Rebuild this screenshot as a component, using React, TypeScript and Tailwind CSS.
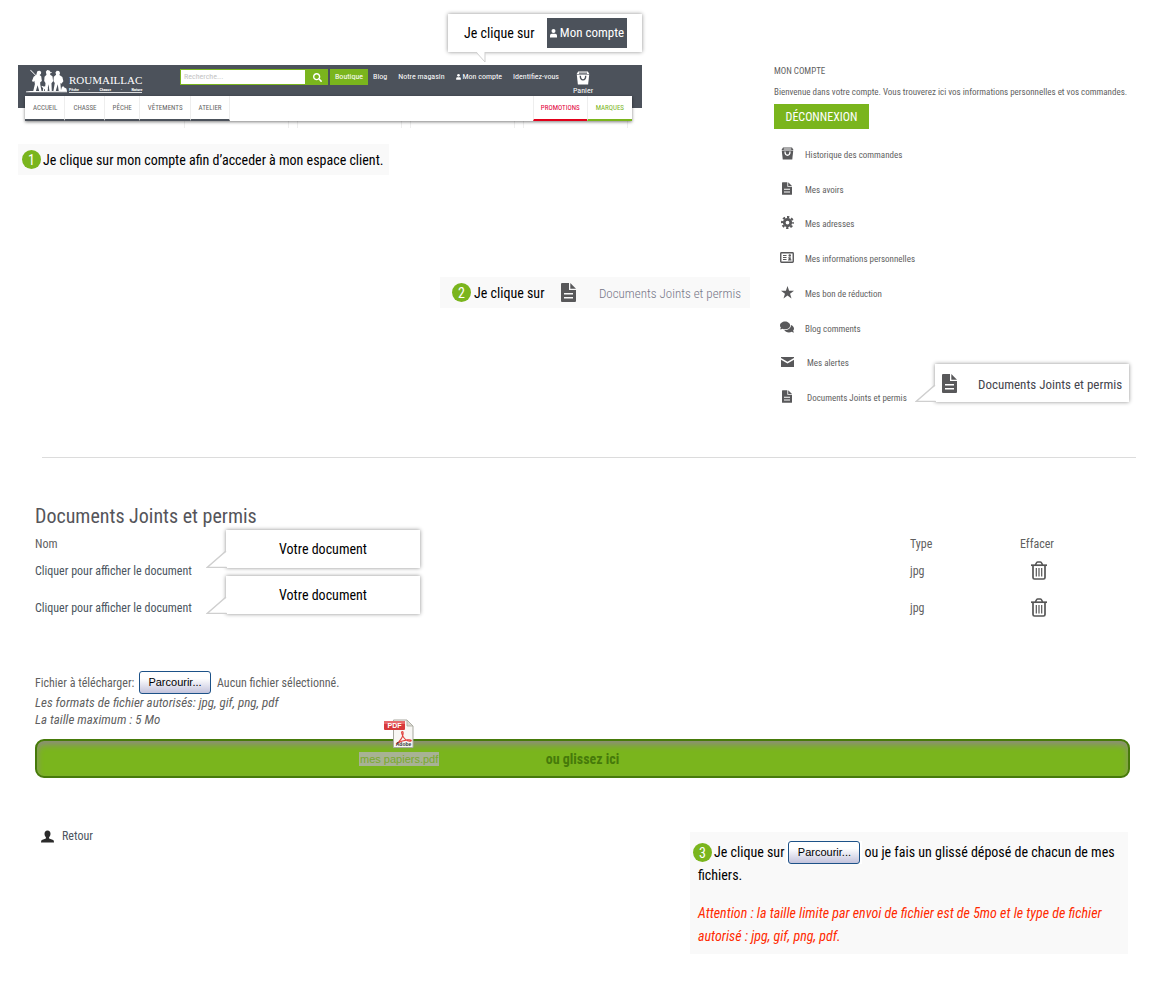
import type { ReactNode } from "react";
import { FaComments, FaSearch } from "react-icons/fa";

type IconProps = { className?: string };

function BagIcon({ className }: IconProps) {
  return (
    <svg viewBox="0 0 26 26" className={className} fill="none" aria-hidden="true">
      <path d="M4 1h18l3 5H1z" fill="currentColor" />
      <path d="M5.500 4h15" className="stroke-[#4c525b] group-[.menu]:stroke-white" strokeWidth="2" />
      <path d="M1.500 7h23L22.500 25h-19z" fill="currentColor" />
      <path className="stroke-[#4c525b] group-[.menu]:stroke-white" d="M8 9c0 10 10 10 10 0" strokeWidth="2.600" />
    </svg>
  );
}

function DocIcon({ className }: IconProps) {
  return (
    <svg viewBox="0 0 15 19" className={className} fill="currentColor" aria-hidden="true">
      <path d="M1 0h7v7h7v11a1 1 0 0 1-1 1H1a1 1 0 0 1-1-1V1a1 1 0 0 1 1-1zm2 10v1.500h9V10zm0 4v1.500h9V14z" fillRule="evenodd" />
      <path d="M9.300 0 15 5.700H9.300z" />
    </svg>
  );
}

function GearIcon({ className }: IconProps) {
  return (
    <svg viewBox="0 0 26 26" className={className} fill="none" stroke="currentColor" aria-hidden="true">
      <circle cx="13" cy="13" r="6.500" strokeWidth="5.500" />
      <circle cx="13" cy="13" r="11" strokeWidth="4" strokeDasharray="4.640 4" strokeDashoffset="2.320" />
    </svg>
  );
}

function IdIcon({ className }: IconProps) {
  return (
    <svg viewBox="0 0 28 22" className={className} fill="none" stroke="currentColor" aria-hidden="true">
      <rect x="1.500" y="1.500" width="25" height="19" rx="1.500" strokeWidth="2.800" />
      <path d="M6 7h7M6 11h7M6 15h7" strokeWidth="2.200" />
      <circle cx="19.500" cy="7" r="2.500" fill="currentColor" stroke="none" />
      <path d="M16.500 10.500h5v4.500H23V17h-7v-2h1.500V12.500h-1z" fill="currentColor" stroke="none" />
    </svg>
  );
}

function StarIcon({ className }: IconProps) {
  return (
    <svg viewBox="0 0 26 26" className={className} fill="currentColor" aria-hidden="true">
      <path d="M13 0l3.200 9.500H26l-7.900 6L21 25l-8-5.800L5 25l2.900-9.500L0 9.500h9.800z" />
    </svg>
  );
}

function MailIcon({ className }: IconProps) {
  return (
    <svg viewBox="0 0 26 20" className={className} fill="currentColor" aria-hidden="true">
      <path d="M0 0h26v2L13 9.500 0 2z" />
      <path d="M0 5.500l13 7.500 13-7.500V20H0z" />
    </svg>
  );
}

function TrashIcon({ className }: IconProps) {
  return (
    <svg viewBox="0 0 16 19" className={className} fill="none" stroke="currentColor" aria-hidden="true">
      <path d="M0 4.200h16" strokeWidth="1.700" />
      <path d="M4.500 4l.8-2c.2-.6.600-1 1.300-1h2.800c.7 0 1.100.4 1.300 1l.8 2" strokeWidth="1.600" />
      <path d="M2 4.500v12c0 1 .5 1.500 1.500 1.500h9c1 0 1.500-.5 1.500-1.500v-12" strokeWidth="1.700" />
      <path d="M5.300 7v8.500M8 7v8.500M10.700 7v8.500" strokeWidth="1.200" />
    </svg>
  );
}

function PersonIcon({ className }: IconProps) {
  return (
    <svg viewBox="0 0 26 26" className={className} fill="currentColor" aria-hidden="true">
      <path d="M13 1c4 0 6 2.500 6 6.500 0 3-1.200 5.500-2.800 7v2.300L23 19.500c2 .8 3 2 3 5.500H0c0-3.500 1-4.700 3-5.500l6.800-2.700v-2.300C8.200 13 7 10.500 7 7.500 7 3.500 9 1 13 1z" />
    </svg>
  );
}

function UserIcon({ className }: IconProps) {
  return (
    <svg viewBox="0 0 14 18" className={className} fill="currentColor" aria-hidden="true">
      <circle cx="7" cy="4" r="4" />
      <path d="M0 17v-3c0-3 1.500-4.500 3.500-4.500h7c2 0 3.500 1.500 3.500 4.500v3z" />
    </svg>
  );
}

function HuntersIcon({ className }: IconProps) {
  return (
    <svg viewBox="0 0 124 72" className={className} fill="currentColor" aria-hidden="true">
      <path d="M14 2l18 18-1.500 1.500L13 4z" />
      <path d="M33 10l2-4 7-1 4 4-1 6-4 3 5 4 2 14-5 4v6l4 20h-7l-5-17-5 17h-8l5-21-2-10-3 4-4-3 5-13 8-5z" />
      <path d="M60 8l4-5 7 1 3 5h4v2h-4l-1 6 7 5 2 15-5 6 1 23h-7l-3-20-4 20h-7l2-24-4-6 1-13 6-6z" />
      <path d="M89 10l4-5 7 1 3 6-2 6 9 6 3 13-6 7-3-2 2 24h-7l-3-20-6 20h-7l4-24-4-6 1-13 7-6z" />
      <path d="M48 50l5 3 8-1 5 5-1 10h-2l-2-7-6 1-1 6h-3l1-9-5-5z" />
      <path d="M105 67l3-11 4-5 4 5 6 3 2 8z" />
      <path d="M0 68l14-2 110 1v3H0z" />
    </svg>
  );
}

function PdfIcon({ className }: IconProps) {
  return (
    <svg viewBox="0 0 30 30" className={className} aria-hidden="true">
      <path d="M9.500 1h13.500l6 6v21.500H9.500z" fill="#f8f7f4" stroke="#a9a9a0" />
      <path d="M23 1v6h6z" fill="#dcdcd6" stroke="#a9a9a0" strokeWidth=".8" />
      <path d="M12 25c3-1 8-8 7-12-1-1-2 0-1 2 1 4 5 8 9 7 2-2-7-2-15 3z" fill="none" stroke="#e0403c" strokeWidth="1.100" />
      <rect x="0" y="2" width="21" height="9" rx="1" fill="#d8393b" />
      <path d="M0 3a1 1 0 0 1 1-1h19a1 1 0 0 1 1 1v2H0z" fill="#e8686a" />
      <text x="10.500" y="9" textAnchor="middle" fill="#fff" fontSize="7" fontWeight="700" fontFamily="Liberation Sans, sans-serif">PDF</text>
      <text x="19.500" y="27" textAnchor="middle" fill="#333" fontSize="5" fontWeight="700" fontFamily="Liberation Sans, sans-serif">Adobe</text>
    </svg>
  );
}

// White balloon with its tail on the lower left corner
function SideCallout({ className, children }: { className: string; children: ReactNode }) {
  return (
    <div className={`absolute z-10 flex h-[38px] w-[194px] items-center bg-white whitespace-nowrap shadow-[0_0_4px_rgba(0,0,0,0.45)] ${className}`}>
      <svg viewBox="0 0 22 18" className="absolute -left-5 bottom-0 h-[18px] w-[22px]" aria-hidden="true">
        <path d="M22 0v18H0L20 2z" fill="#fff" />
        <path d="M20 1L1 17.500h20" fill="none" stroke="#cfcfcf" strokeWidth="1.500" />
        <path d="M20.500 1.500h1.500v15.500h-1.500z" fill="#fff" />
      </svg>
      {children}
    </div>
  );
}

function StepNumber({ value }: { value: number }) {
  return (
    <span className="inline-flex size-[19px] shrink-0 items-center justify-center rounded-full bg-[#7ab51d] text-sm leading-none text-white">
      {value}
    </span>
  );
}

function BrowseButton({ id }: { id: string }) {
  return (
    <button
      id={id}
      type="button"
      className="inline-flex h-[23px] w-[72px] shrink-0 items-center justify-center rounded-[3px] border border-[#1d5288] bg-linear-to-b from-white from-30% to-[#c3c3dc] font-['Liberation_Sans',sans-serif] text-[11px] text-black"
    >
      Parcourir...
    </button>
  );
}

const categories = ["ACCUEIL", "CHASSE", "PÊCHE", "VÊTEMENTS", "ATELIER"];

const accountLinks = [
  { label: "Historique des commandes", icon: <BagIcon className="size-[13px]" /> },
  { label: "Mes avoirs", icon: <DocIcon className="h-[13px] w-[10px]" /> },
  { label: "Mes adresses", icon: <GearIcon className="size-[13px]" /> },
  { label: "Mes informations personnelles", icon: <IdIcon className="h-[11px] w-[14px]" /> },
  { label: "Mes bon de réduction", icon: <StarIcon className="size-[13px]" /> },
  { label: "Blog comments", icon: <FaComments className="size-[14px]" /> },
  { label: "Mes alertes", icon: <MailIcon className="h-[10px] w-[13px]" /> },
  { label: "Documents Joints et permis", icon: <DocIcon className="h-[13px] w-[10px]" /> },
];

function ShopHeader() {
  return (
    <header className="w-full">
      <div className="h-[43px] bg-[#4c525b] text-[8px] text-white">
        <div className="flex h-[31px] items-start">
          <a href="#" className="mt-1 ml-2 flex w-[154px] items-end" aria-label="Roumaillac">
            <HuntersIcon className="h-[24px] w-[41px]" />
            <span className="ml-0.5 flex flex-col border-b border-white/80">
              <span className="font-['Liberation_Serif',serif] text-[11px] leading-[14px]">ROUMAILLAC</span>
              <span className="flex justify-between text-[4px] leading-[5px] font-bold">
                <span>Pêche</span><span>-</span><span>Chasse</span><span>-</span><span>Nature</span>
              </span>
            </span>
          </a>
          <form className="mt-1 flex h-4 w-[148px]">
            <input
              aria-label="Recherche"
              placeholder="Recherche..."
              className="min-w-0 flex-1 border border-[#7ab51d] bg-white px-[3px] text-[8px] text-black outline-none placeholder:text-[#c4c4c4]"
            />
            <button type="button" aria-label="Rechercher" className="flex w-[22px] items-center justify-center bg-[#7ab51d]">
              <FaSearch className="size-[9px]" />
            </button>
          </form>
          <nav className="mt-1 flex h-4 items-center leading-4">
            <a href="#" className="ml-0.5 bg-[#7ab51d] px-[5px]">Boutique</a>
            <a href="#" className="ml-[5px]">Blog</a>
            <a href="#" className="ml-[11px]">Notre magasin</a>
            <a href="#" className="ml-[11px] flex items-center gap-0.5">
              <UserIcon className="h-[6px] w-[5px]" />
              Mon compte
            </a>
            <a href="#" className="ml-[11px]">Identifiez-vous</a>
          </nav>
          <a href="#" className="mt-1.5 ml-[14px] flex flex-col items-center leading-[11px]">
            <BagIcon className="size-[14px]" />
            Panier
          </a>
        </div>
      </div>
      <nav className="relative mx-[7px] -mt-3 mr-[10px] flex h-[25px] items-stretch bg-white text-[7px] text-[#666] shadow-[0_1px_3px_rgba(0,0,0,0.5)]">
        {categories.map((c) => (
          <a key={c} href="#" className="flex items-center border-r border-b-2 border-r-[#eee] border-b-[#4c525b] pr-[7px] pl-2">
            {c}
          </a>
        ))}
        <a href="#" className="ml-auto flex items-center border-b-2 border-l border-b-[#e2001a] border-l-[#eee] px-[7px] text-[#e2003a]">PROMOTIONS</a>
        <a href="#" className="flex items-center border-b-2 border-l border-b-[#7ab51d] border-l-[#eee] px-2 text-[#7ab51d]">MARQUES</a>
      </nav>
      <div className="ml-[166px] flex h-[7px] gap-2">
        {[0, 1, 2, 3].map((n) => (
          <span key={n} className="w-[105px] border-x border-[#eee]" />
        ))}
      </div>
    </header>
  );
}

function AccountPanel() {
  return (
    <section className="flex-1 pt-[64px] pl-6 text-[9px] text-[#5f5f5f]">
      <h2 className="leading-[14px]">MON COMPTE</h2>
      <p className="mt-[7px] leading-[14px]">
        Bienvenue dans votre compte. Vous trouverez ici vos informations personnelles et vos commandes.
      </p>
      <button type="button" className="mt-[5px] block h-[25px] w-[95px] bg-[#7ab51d] text-xs text-white">
        DÉCONNEXION
      </button>
      <ul className="menu group mt-[9px] grid h-[278px] grid-rows-8">
        {accountLinks.map(({ label, icon }, i) => (
          <li key={label} className="relative flex items-center">
            <a href="#" className="flex items-center">
              <span className="flex w-[26px] justify-center pb-1 text-[#58585a]">{icon}</span>
              <span className={i > 5 ? "ml-[7px]" : "ml-[5px]"}>{label}</span>
            </a>
            {i === 7 && (
              <SideCallout className="bottom-3.5 left-[161px] gap-[21px] pl-[7px] text-[13px] text-[#45454d]">
                <DocIcon className="h-[19px] w-[15px] shrink-0 text-[#58585a]" />
                <span className="pt-1">Documents Joints et permis</span>
              </SideCallout>
            )}
          </li>
        ))}
      </ul>
    </section>
  );
}

function DocumentRow({ calloutClass }: { calloutClass: string }) {
  return (
    <tr className="h-[37px]">
      <td>
        <span className="relative inline-block">
          <a href="#" className="text-[#4b5560]">Cliquer pour afficher le document</a>
          <SideCallout className={`left-[191px] justify-center text-sm text-black ${calloutClass}`}>Votre document</SideCallout>
        </span>
      </td>
      <td className="w-[110px]">jpg</td>
      <td className="w-[110px] pl-[11px]">
        <button type="button" aria-label="Effacer" className="block">
          <TrashIcon className="h-[19px] w-4 text-[#555]" />
        </button>
      </td>
    </tr>
  );
}

export default function App() {
  return (
    <main className="min-h-screen bg-white font-['Roboto_Condensed',Roboto,sans-serif] text-sm text-black">
      <div className="flex pr-6 pl-[18px]">
        <div className="flex w-[732px] max-w-[66%] flex-col">
          <div className="flex w-[624px] max-w-full flex-col">
            <div className="relative mt-3.5 mb-[13px] flex h-[38px] w-[194px] items-center self-end bg-white pl-4 shadow-[0_0_4px_rgba(0,0,0,0.45)]">
              Je clique sur
              <a href="#" className="mr-[15px] ml-auto flex h-[30px] w-[80px] items-center justify-center gap-[3px] bg-[#4c525b] text-[13px] text-white">
                <UserIcon className="h-[9px] w-[7px] shrink-0" />
                Mon compte
              </a>
              <svg viewBox="0 0 12 12" className="absolute -bottom-[11px] left-7 size-3" aria-hidden="true">
                <path d="M0 0h9v12z" fill="#fff" />
                <path d="M0 1l9 10V1" fill="none" stroke="#cfcfcf" />
              </svg>
            </div>
            <ShopHeader />
          </div>
          <p className="mt-[16px] flex h-[31px] w-fit items-center gap-0.5 bg-[#f9f9f9] pr-1.5 pl-1">
            <StepNumber value={1} />
            Je clique sur mon compte afin d’acceder à mon espace client.
          </p>
          <p className="mt-[102px] flex h-[31px] w-[310px] items-center self-end bg-[#f9f9f9] pr-[9px] pl-3">
            <StepNumber value={2} />
            <span className="ml-[3px]">Je clique sur</span>
            <DocIcon className="ml-[17px] h-[19px] w-[15px] shrink-0 text-[#58585a]" />
            <span className="ml-auto pt-1 text-[13px] font-light text-[#777788]">Documents Joints et permis</span>
          </p>
        </div>
        <AccountPanel />
      </div>

      <hr className="mt-[41px] mr-[25px] ml-[42px] border-[#dcdcdc]" />

      <section className="mt-[46px] mr-[31px] ml-[35px] text-xs text-[#5f5f5f]">
        <h1 className="text-xl leading-6 text-[#55555a]">Documents Joints et permis</h1>
        <table className="mt-[7px] w-full text-left">
          <thead>
            <tr className="h-[17px]">
              <th className="font-normal">Nom</th>
              <th className="font-normal">Type</th>
              <th className="font-normal">Effacer</th>
            </tr>
          </thead>
          <tbody>
            <DocumentRow calloutClass="-top-[33px]" />
            <DocumentRow calloutClass="-top-[24px]" />
          </tbody>
        </table>

        <div className="mt-[45px] flex items-center">
          <label htmlFor="fichier" className="w-[104px]">Fichier à télécharger:</label>
          <BrowseButton id="fichier" />
          <span className="ml-1.5">Aucun fichier sélectionné.</span>
        </div>
        <p className="text-[13px] leading-[17px] italic">Les formats de fichier autorisés: jpg, gif, png, pdf</p>
        <p className="text-[13px] leading-[17px] italic">La taille maximum : 5 Mo</p>

        <div className="relative mt-[11px] flex h-[39px] items-center justify-center rounded-[9px] border-2 border-[#467a0a] bg-[#7ab51d] text-sm font-bold text-[#467a0a] shadow-[inset_0_4px_6px_#8c8c7c]">
          ou glissez ici
          <figure className="absolute -top-[22px] left-[322px] flex flex-col items-center font-['Liberation_Sans',sans-serif] text-[11px] font-normal">
            <PdfIcon className="size-[30px]" />
            <figcaption className="mt-[3px] bg-[#a8b294] px-px leading-[14px] text-[#78a92c]">mes papiers.pdf</figcaption>
          </figure>
        </div>
      </section>

      <div className="mt-[54px] mr-[33px] mb-12 ml-[41px] flex items-start justify-between">
        <a href="#" className="mt-[-4px] flex items-center gap-2 text-xs text-[#4b5560]">
          <PersonIcon className="size-[13px] text-[#2b2b2b]" />
          Retour
        </a>
        <div className="w-[438px] bg-[#f9f9f9] pt-[9px] pr-2 pb-[6px] pl-2 leading-[23px]">
          <div className="-ml-[5px] flex items-center">
            <StepNumber value={3} />
            <span className="ml-0.5">Je clique sur</span>
            <span className="mx-0.5 inline-flex bg-white px-0.5">
              <BrowseButton id="parcourir-aide" />
            </span>
            <span>ou je fais un glissé déposé de chacun de mes</span>
          </div>
          <p>fichiers.</p>
          <p className="mt-[15px] text-[#ff2a00] italic">
            Attention : la taille limite par envoi de fichier est de 5mo et le type de fichier autorisé : jpg, gif, png, pdf.
          </p>
        </div>
      </div>
    </main>
  );
}
